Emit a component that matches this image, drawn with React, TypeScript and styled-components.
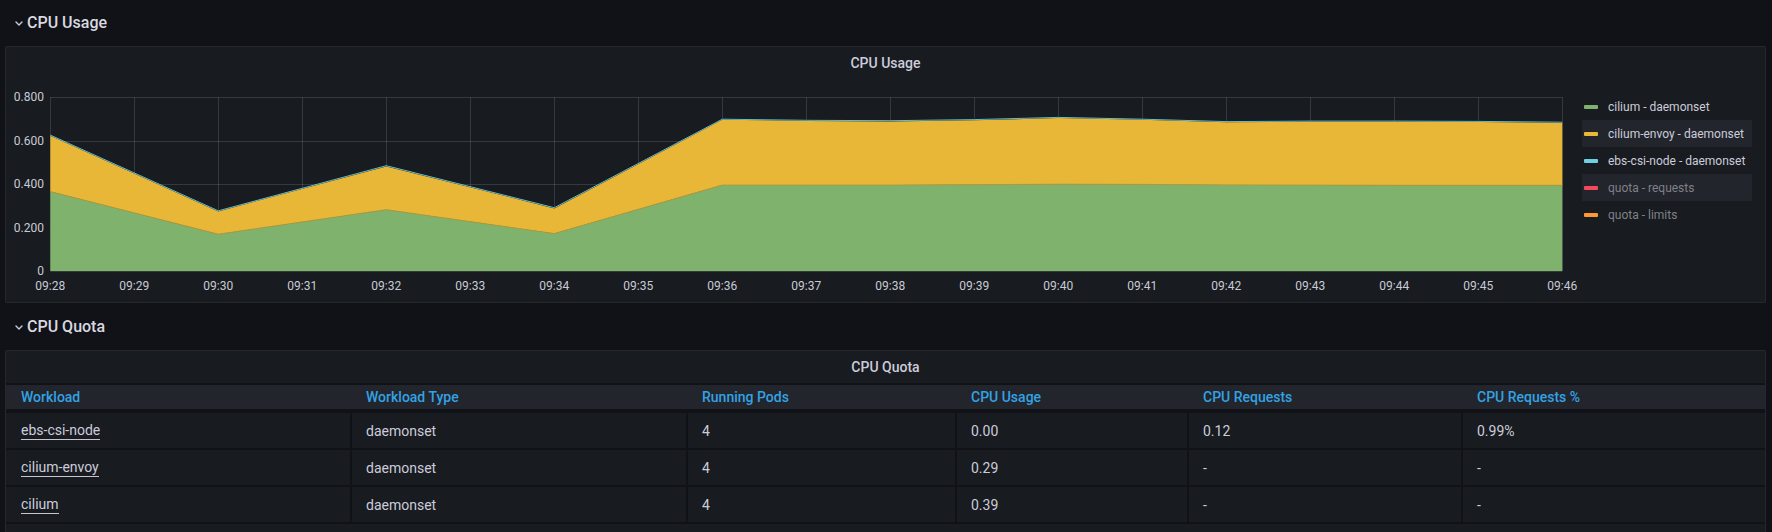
import React from "react";
import styled, { createGlobalStyle } from "styled-components";

const GlobalStyle = createGlobalStyle`
  html, body {
    margin: 0;
    padding: 0;
    background: #111217;
  }
  body {
    font-family: Roboto, "Liberation Sans", Arial, sans-serif;
    color: #ccccdc;
    -webkit-font-smoothing: antialiased;
  }
`;

const Page = styled.div`
  padding: 0 6px 0 5px;
  display: flex;
  flex-direction: column;
`;

const RowHeader = styled.div<{ $height?: number }>`
  height: ${(p) => p.$height ?? 46}px;
  display: flex;
  align-items: flex-end;
  padding-bottom: 13px;
  box-sizing: border-box;
`;

const ChevronIcon = styled.svg`
  width: 16px;
  height: 16px;
  margin-left: 6px;
  margin-bottom: 2px;
  flex: none;
`;

const RowTitle = styled.span`
  font-size: 16px;
  font-weight: 500;
  color: #d8d9e0;
  line-height: 20px;
`;

const Panel = styled.section<{ $height?: number }>`
  background: #181b1f;
  border: 1px solid rgba(204, 204, 220, 0.07);
  border-radius: 2px;
  display: flex;
  flex-direction: column;
  ${(p) => (p.$height ? `height: ${p.$height}px;` : "")}
  box-sizing: border-box;
  overflow: hidden;
`;

const PanelHeader = styled.header`
  height: 32px;
  flex: none;
  display: flex;
  align-items: center;
  justify-content: center;
  font-size: 14px;
  font-weight: 500;
  color: #ccccdc;
`;

const ChartBody = styled.div`
  flex: 1;
  display: flex;
  flex-direction: row;
`;

const ChartSvg = styled.svg`
  width: 1572px;
  height: 223px;
  flex: none;
  display: block;
`;

const Legend = styled.ul`
  list-style: none;
  margin: 0;
  padding: 14px 0 0 4px;
  display: flex;
  flex-direction: column;
`;

const LegendRow = styled.li<{ $striped?: boolean }>`
  width: 170px;
  height: 27px;
  display: flex;
  align-items: center;
  gap: 10px;
  padding-left: 2px;
  box-sizing: border-box;
  background: ${(p) => (p.$striped ? "#22252b" : "transparent")};
`;

const Swatch = styled.span<{ $color: string }>`
  width: 14px;
  height: 4px;
  border-radius: 1px;
  background: ${(p) => p.$color};
  flex: none;
`;

const LegendLabel = styled.span<{ $muted?: boolean }>`
  font-size: 12px;
  color: ${(p) => (p.$muted ? "#7f8088" : "#ccccdc")};
  white-space: nowrap;
`;

const TableWrap = styled.div`
  border-top: 2px solid #111217;
  display: flex;
  flex-direction: column;
`;

const COLS = "344px 336px 269px 232px 274px 304px";

const HeaderRow = styled.div`
  display: grid;
  grid-template-columns: ${COLS};
  height: 24px;
  background: #22252b;
  border-bottom: 4px solid #111217;
`;

const HeaderCell = styled.div`
  display: flex;
  align-items: center;
  padding-left: 16px;
  font-size: 14px;
  font-weight: 500;
  color: #33a2e5;
  white-space: nowrap;
  &:first-child {
    padding-left: 15px;
  }
`;

const BodyRow = styled.div`
  display: grid;
  grid-template-columns: ${COLS};
  height: 35px;
  border-bottom: 2px solid #111217;
`;

const BodyCell = styled.div`
  display: flex;
  align-items: center;
  padding-left: 14px;
  border-left: 2px solid #111217;
  font-size: 14px;
  color: #ccccdc;
  white-space: nowrap;
  &:first-child {
    border-left: none;
    padding-left: 15px;
  }
`;

const CellLink = styled.span`
  display: inline-block;
  line-height: 16px;
  padding-bottom: 1px;
  border-bottom: 1px solid #c4c4d2;
`;

/* ---------- chart data ---------- */
const PLOT_LEFT = 44.3;
const STEP = 84;
const PLOT_TOP = 18;
const PLOT_BOTTOM = 192;
const PER_UNIT = (PLOT_BOTTOM - PLOT_TOP) / 0.8;

const X = (i: number) => PLOT_LEFT + i * STEP;
const Y = (v: number) => PLOT_BOTTOM - v * PER_UNIT;

const idx = [0, 2, 4, 6, 8, 9, 10, 11, 12, 13, 14, 15, 16, 17, 18];
const green = [0.365, 0.169, 0.282, 0.172, 0.395, 0.395, 0.395, 0.397, 0.399, 0.398, 0.396, 0.395, 0.394, 0.394, 0.394];
const yellowTop = [0.622, 0.274, 0.481, 0.288, 0.695, 0.69, 0.688, 0.693, 0.703, 0.695, 0.684, 0.686, 0.686, 0.685, 0.681];
const cyanTop = yellowTop.map((v) => v + 0.003);

const pts = (vals: number[]) => vals.map((v, k) => `${X(idx[k]).toFixed(1)},${Y(v).toFixed(1)}`);
const rev = (a: string[]) => [...a].reverse();

const greenPoly = [...pts(green), `${X(18)},${PLOT_BOTTOM}`, `${X(0)},${PLOT_BOTTOM}`].join(" ");
const yellowPoly = [...pts(yellowTop), ...rev(pts(green))].join(" ");

const minutes = Array.from({ length: 19 }, (_, i) => `09:${String(28 + i).padStart(2, "0")}`);
const yTicks: [number, string][] = [
  [0.8, "0.800"],
  [0.6, "0.600"],
  [0.4, "0.400"],
  [0.2, "0.200"],
  [0, "0"],
];

const legendItems = [
  { label: "cilium - daemonset", color: "#7EB26D" },
  { label: "cilium-envoy - daemonset", color: "#EAB839", striped: true },
  { label: "ebs-csi-node - daemonset", color: "#6ED0E0" },
  { label: "quota - requests", color: "#F2495C", striped: true, muted: true },
  { label: "quota - limits", color: "#FF9830", muted: true },
];

const headers = ["Workload", "Workload Type", "Running Pods", "CPU Usage", "CPU Requests", "CPU Requests %"];
const rows = [
  ["ebs-csi-node", "daemonset", "4", "0.00", "0.12", "0.99%"],
  ["cilium-envoy", "daemonset", "4", "0.29", "-", "-"],
  ["cilium", "daemonset", "4", "0.39", "-", "-"],
];

const Chevron = () => (
  <ChevronIcon viewBox="0 0 16 16">
    <polyline points="5,7 8,10 11,7" fill="none" stroke="#ccccdc" strokeWidth="1.4" strokeLinecap="round" strokeLinejoin="round" />
  </ChevronIcon>
);

const Chart = () => (
  <ChartSvg viewBox="0 0 1572 223">
    <g stroke="rgba(204,204,220,0.17)" strokeWidth="1">
      {yTicks.map(([v]) => (
        <line key={v} x1={PLOT_LEFT} x2={X(18)} y1={Math.round(Y(v)) + 0.5} y2={Math.round(Y(v)) + 0.5} />
      ))}
      {minutes.map((_, i) => (
        <line key={i} x1={Math.round(X(i)) + 0.5} x2={Math.round(X(i)) + 0.5} y1={PLOT_TOP} y2={PLOT_BOTTOM} />
      ))}
    </g>
    <polygon points={greenPoly} fill="#7EB26D" />
    <polygon points={yellowPoly} fill="#E8B738" />
    <polyline points={pts(green).join(" ")} fill="none" stroke="#b09a3c" strokeWidth="1" />
    <polyline points={pts(cyanTop).join(" ")} fill="none" stroke="#6ED0E0" strokeWidth="0.9" />
    <g fill="#c9cad6" fontSize="12" fontFamily="Roboto, 'Liberation Sans', sans-serif">
      {yTicks.map(([v, l]) => (
        <text key={l} x={38} y={Y(v) + 4} textAnchor="end">
          {l}
        </text>
      ))}
      {minutes.map((m, i) => (
        <text key={m} x={X(i)} y={211} textAnchor="middle">
          {m}
        </text>
      ))}
    </g>
  </ChartSvg>
);

export default function App() {
  return (
    <>
      <GlobalStyle />
      <Page>
        <RowHeader $height={46}>
          <Chevron />
          <RowTitle>CPU Usage</RowTitle>
        </RowHeader>
        <Panel $height={257}>
          <PanelHeader>CPU Usage</PanelHeader>
          <ChartBody>
            <Chart />
            <Legend>
              {legendItems.map((it) => (
                <LegendRow key={it.label} $striped={it.striped}>
                  <Swatch $color={it.color} />
                  <LegendLabel $muted={it.muted}>{it.label}</LegendLabel>
                </LegendRow>
              ))}
            </Legend>
          </ChartBody>
        </Panel>
        <RowHeader $height={47}>
          <Chevron />
          <RowTitle>CPU Quota</RowTitle>
        </RowHeader>
        <Panel $height={200}>
          <PanelHeader>CPU Quota</PanelHeader>
          <TableWrap>
            <HeaderRow>
              {headers.map((h) => (
                <HeaderCell key={h}>{h}</HeaderCell>
              ))}
            </HeaderRow>
            {rows.map((r) => (
              <BodyRow key={r[0]}>
                {r.map((c, ci) => (
                  <BodyCell key={ci}>{ci === 0 ? <CellLink>{c}</CellLink> : c}</BodyCell>
                ))}
              </BodyRow>
            ))}
          </TableWrap>
        </Panel>
      </Page>
    </>
  );
}
